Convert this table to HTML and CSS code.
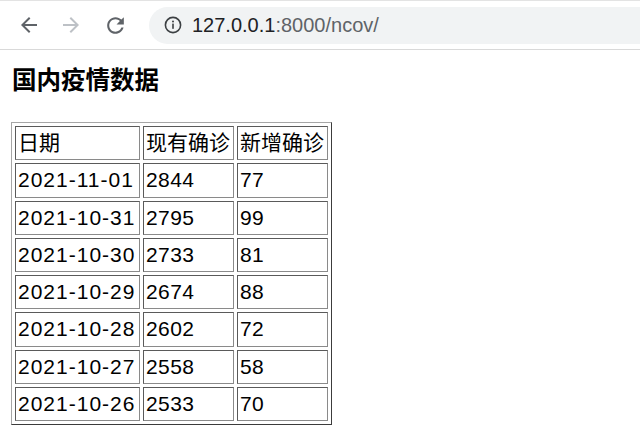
FILE: index.html
```html
<!DOCTYPE html>
<html lang="zh-CN">
<head>
<meta charset="utf-8">
<title>国内疫情数据</title>
<link rel="stylesheet" href="styles.css">
</head>
<body>
<div class="chrome">
  <svg class="nav back" viewBox="0 0 24 24" width="24" height="24"><path d="M20 11H7.83l5.59-5.59L12 4l-8 8 8 8 1.41-1.41L7.83 13H20v-2z"/></svg>
  <svg class="nav fwd" viewBox="0 0 24 24" width="24" height="24"><path d="M4 11h12.17l-5.590-5.59L12 4l8 8-8 8-1.41-1.41L16.17 13H4v-2z"/></svg>
  <svg class="nav reload" viewBox="0 0 24 24" width="25" height="25"><path d="M17.65 6.35C16.2 4.9 14.21 4 12 4c-4.42 0-7.99 3.58-7.99 8s3.57 8 7.99 8c3.73 0 6.84-2.55 7.73-6h-2.08c-.82 2.33-3.04 4-5.65 4-3.31 0-6-2.69-6-6s2.69-6 6-6c1.66 0 3.14.69 4.22 1.78L13 11h7V4l-2.35 2.35z"/></svg>
  <div class="omnibox">
    <svg class="info" viewBox="0 0 18 18" width="18" height="18"><circle cx="9" cy="9" r="7.6" fill="none" stroke="#3c4043" stroke-width="1.6"/><rect x="8.2" y="7.6" width="1.6" height="5.2" fill="#3c4043"/><circle cx="9" cy="5.4" r="1" fill="#3c4043"/></svg>
    <span class="url"><span class="host">127.0.0.1</span><span class="rest">:8000/ncov/</span></span>
  </div>
</div>
<div class="page">
  <h3 class="title">国内疫情数据</h3>
  <table class="data">
    <tr><td class="c-date">日期</td><td>现有确诊</td><td>新增确诊</td></tr>
    <tr><td>2021-11-01</td><td>2844</td><td>77</td></tr>
    <tr><td>2021-10-31</td><td>2795</td><td>99</td></tr>
    <tr><td>2021-10-30</td><td>2733</td><td>81</td></tr>
    <tr><td>2021-10-29</td><td>2674</td><td>88</td></tr>
    <tr><td>2021-10-28</td><td>2602</td><td>72</td></tr>
    <tr><td>2021-10-27</td><td>2558</td><td>58</td></tr>
    <tr><td>2021-10-26</td><td>2533</td><td>70</td></tr>
  </table>
</div>
</body>
</html>
```
FILE: styles.css
```css
html, body {
  margin: 0;
  padding: 0;
  background: #fff;
}
body {
  font-family: "Liberation Sans", "Noto Sans CJK SC", sans-serif;
  color: #000;
}
.chrome {
  height: 48px;
  border-top: 1px solid #e3e3e3;
  border-bottom: 1px solid #d9d9d9;
  display: flex;
  align-items: center;
  overflow: hidden;
  box-sizing: content-box;
}
.nav {
  flex: none;
  fill: #5f6368;
}
.back { margin-left: 17px; }
.fwd { margin-left: 18px; fill: #bdc1c6; }
.reload { margin-left: 20px; }
.omnibox {
  flex: 1;
  height: 37px;
  margin-left: 21px;
  margin-right: -30px;
  border-radius: 19px;
  background: #f1f3f4;
  display: flex;
  align-items: center;
  padding-left: 15px;
}
.info { flex: none; }
.url {
  margin-left: 10px;
  font-family: "Liberation Sans", sans-serif;
  font-size: 20px;
  color: #5f6368;
  white-space: nowrap;
}
.host { color: #202124; }
.page {
  padding: 0 11px;
}
.title {
  margin: 14px 0 28px 1px;
  font-family: "Noto Sans CJK SC", sans-serif;
  font-weight: bold;
  font-size: 24.5px;
  line-height: 30px;
}
.data {
  border: 1px solid;
  border-color: #a6a6a6 #3c3c3c #3c3c3c #a6a6a6;
  border-spacing: 3px;
  font-family: "Liberation Sans", "Noto Sans CJK SC", sans-serif;
  font-size: 21px;
  line-height: 28.25px;
}
.data td {
  border: 1px solid;
  border-color: #5a5a5a #8a8a8a #8a8a8a #5a5a5a;
  padding: 2px 3px 2px 2px;
  text-align: left;
  vertical-align: middle;
  white-space: nowrap;
}
.data tr + tr td { letter-spacing: 0.4px; }
.data tr + tr td:first-child { letter-spacing: 1px; }
.data td.c-date { width: 118px; }
```
